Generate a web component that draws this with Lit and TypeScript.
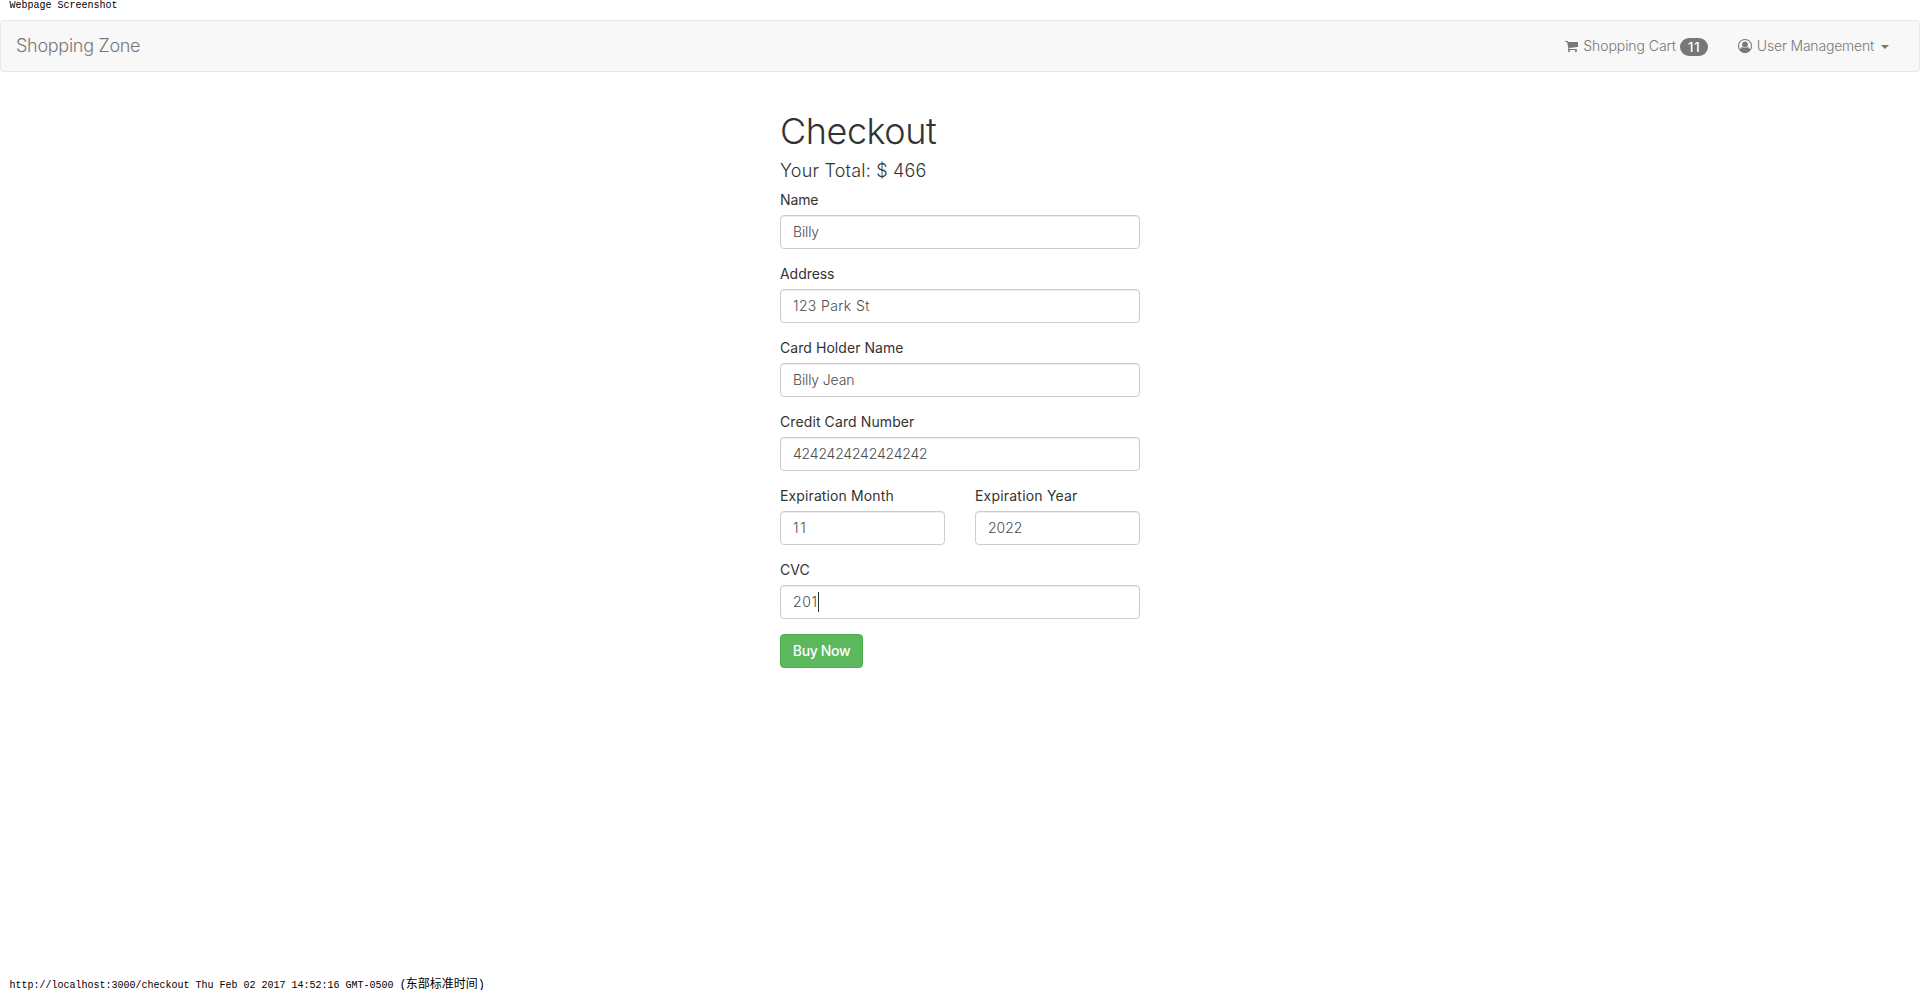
import { LitElement, html, css, svg } from "lit";
import { customElement } from "lit/decorators.js";

interface Field {
  label: string;
  value: string;
  labelTrack: number;
  valueTrack: number;
  half?: boolean;
  focused?: boolean;
}

const FIELDS: Field[] = [
  { label: "Name", value: "Billy", labelTrack: -0.1, valueTrack: -0.15 },
  { label: "Address", value: "123 Park St", labelTrack: -0.05, valueTrack: 0.38 },
  { label: "Card Holder Name", value: "Billy Jean", labelTrack: 0.06, valueTrack: -0.15 },
  { label: "Credit Card Number", value: "4242424242424242", labelTrack: 0.1, valueTrack: -0.2 },
  { label: "Expiration Month", value: "11", labelTrack: 0.12, valueTrack: 1.7, half: true },
  { label: "Expiration Year", value: "2022", labelTrack: 0.2, valueTrack: 0, half: true },
  { label: "CVC", value: "201", labelTrack: 0, valueTrack: 0.6, focused: true },
];

const CART = svg`<path d="M640 1536q0 52-38 90t-90 38-90-38-38-90 38-90 90-38 90 38 38 90zm896 0q0 52-38 90t-90 38-90-38-38-90 38-90 90-38 90 38 38 90zm128-1088v512q0 24-16.500 42.500t-40.500 21.500l-1044 122q13 60 13 70 0 16-24 64h920q26 0 45 19t19 45-19 45-45 19h-1024q-26 0-45-19t-19-45q0-11 8-31.500t16-36 21.500-40 15.500-29.500l-177-823h-204q-26 0-45-19t-19-45 19-45 45-19h256q16 0 28.500 6.500t19.500 15.500 13 24.500 8 26 5.500 29.500 4.500 26h1201q26 0 45 19t19 45z"/>`;
const USER = svg`<path d="M896 0q182 0 348 71t286 191 191 286 71 348q0 181-70.500 347t-190.500 286-286 191.500-349 71.500-349-71-285.500-191.500-190.500-286-71-347.500 71-348 191-286 286-191 348-71zm619 1351q149-205 149-455 0-156-61-298t-164-245-245-164-298-61-298 61-245 164-164 245-61 298q0 250 149 455 66-327 306-327 131 128 313 128t313-128q240 0 306 327zm-235-647q0-159-112.500-271.500t-271.500-112.500-271.500 112.500-112.500 271.500 112.500 271.500 271.500 112.500 271.500-112.500 112.500-271.500z"/>`;

@customElement("app-root")
export class AppRoot extends LitElement {
  static styles = css`
    :host {
      display: flex;
      flex-direction: column;
      box-sizing: border-box;
      height: 990px;
      background: #fff;
      color: #333;
      font: 300 14px/20px Inter, "Liberation Sans", sans-serif;
      overflow: hidden;
    }
    * { box-sizing: border-box; }
    .print {
      flex: none;
      height: 20px;
      padding-left: 9.5px;
      color: #000;
      font: 400 10px/12px "Liberation Mono", "Noto Sans CJK SC", monospace;
      white-space: pre;
    }
    .print.head { line-height: 11px; }
    .print.foot { margin-top: auto; height: 13px; }
    .zh { font: 400 12px/12px "Noto Sans CJK SC", sans-serif; }
    .paren { font: 400 12px/12px "Liberation Mono", monospace; letter-spacing: -1px; }
    .navbar {
      flex: none;
      display: flex;
      align-items: center;
      justify-content: space-between;
      height: 52px;
      padding: 0 30px 0 15px;
      border: 1px solid #e7e7e7;
      border-radius: 4px;
      background: #f8f8f8;
      color: #777;
    }
    .brand { font-size: 18px; letter-spacing: -0.28px; }
    .links { display: flex; align-items: center; gap: 30px; }
    .link { display: flex; align-items: center; }
    .icon { flex: none; width: 14px; height: 14px; fill: currentColor; }
    .cart { letter-spacing: -0.06px; margin-left: 4px; }
    .user { letter-spacing: -0.2px; margin-left: 5px; }
    .badge {
      width: 28px;
      height: 18px;
      margin-top: 1px;
      margin-left: 4px;
      border-radius: 10px;
      background: #777;
      color: #fff;
      font-weight: 500;
      font-size: 13px;
      line-height: 18px;
      letter-spacing: 1px;
      text-align: center;
      padding-left: 1px;
    }
    .caret {
      margin-left: 7px;
      margin-top: 2px;
      border-top: 4px solid;
      border-left: 4px solid transparent;
      border-right: 4px solid transparent;
    }
    .checkout { width: 360px; margin: 40px auto 0; }
    h1 {
      margin: 0 0 9px;
      font-weight: 300;
      font-size: 36px;
      line-height: 39.6px;
      letter-spacing: -0.45px;
    }
    h4 {
      margin: 0 0 9.6px;
      font-weight: 300;
      font-size: 18px;
      line-height: 19.8px;
      letter-spacing: 0.2px;
    }
    .form {
      display: grid;
      grid-template-columns: 165px 165px;
      column-gap: 30px;
      row-gap: 15px;
    }
    .field { grid-column: span 2; }
    .field.half { grid-column: span 1; }
    .label { display: block; margin-bottom: 5px; font-weight: 400; }
    .control {
      display: flex;
      align-items: center;
      height: 34px;
      padding: 0 12px;
      border: 1px solid #ccc;
      border-radius: 4px;
      background: #fff;
      color: #4c4c4c;
      box-shadow: inset 0 1px 1px rgba(0, 0, 0, 0.075);
    }
    .cursor { width: 1px; height: 20px; background: #333; }
    .buy {
      display: block;
      height: 34px;
      width: 83px;
      margin-top: 15px;
      padding: 0;
      border: 1px solid #4cae4c;
      border-radius: 4px;
      background: #5cb85c;
      color: #fff;
      font: 500 14px/20px Inter, "Liberation Sans", sans-serif;
      letter-spacing: -0.35px;
    }
  `;

  private field(f: Field) {
    return html`<div class="field ${f.half ? "half" : ""}">
      <span class="label" style="letter-spacing:${f.labelTrack}px">${f.label}</span>
      <div class="control" role="textbox" aria-label=${f.label}>
        <span style="letter-spacing:${f.valueTrack}px">${f.value}</span>${f.focused ? html`<i class="cursor"></i>` : null}
      </div>
    </div>`;
  }

  render() {
    return html`
      <div class="print head">Webpage Screenshot</div>
      <nav class="navbar">
        <span class="brand">Shopping Zone</span>
        <div class="links">
          <div class="link">
            <svg class="icon" viewBox="0 0 1792 1792">${CART}</svg>
            <span class="cart">Shopping Cart</span><span class="badge">11</span>
          </div>
          <div class="link">
            <svg class="icon" viewBox="0 0 1792 1792">${USER}</svg>
            <span class="user">User Management</span><i class="caret"></i>
          </div>
        </div>
      </nav>
      <main class="checkout">
        <h1>Checkout</h1>
        <h4>Your Total: $ 466</h4>
        <div class="form">${FIELDS.map((f) => this.field(f))}</div>
        <button class="buy">Buy Now</button>
      </main>
      <div class="print foot">http://localhost:3000/checkout Thu Feb 02 2017 14:52:16 GMT-0500 <span class="paren">(</span><span class="zh">东部标准时间</span><span class="paren">)</span></div>
    `;
  }
}
